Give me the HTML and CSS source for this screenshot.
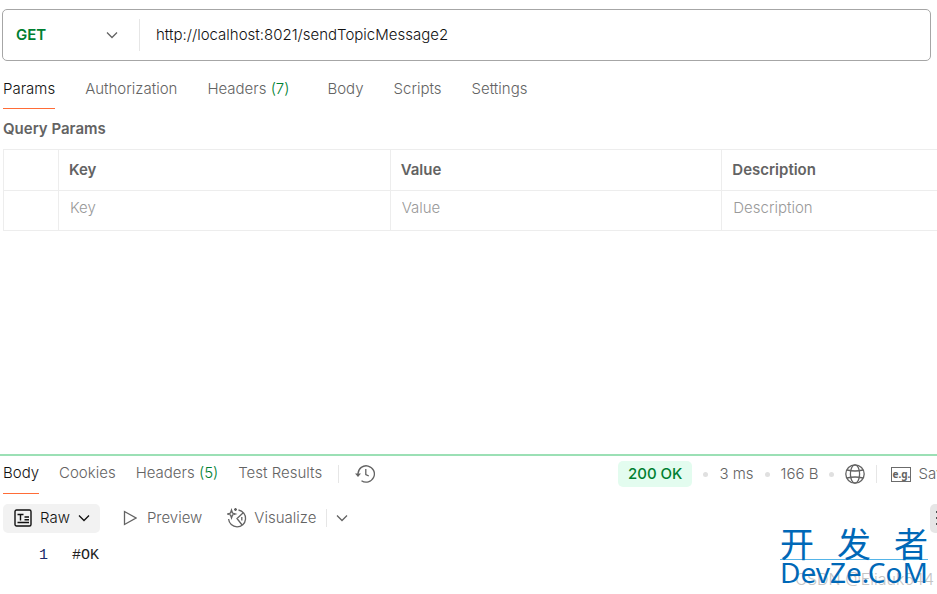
FILE: index.html
```html
<!DOCTYPE html>
<html lang="en">
  <head>
    <meta charset="utf-8">
    <title>Request</title>
    <link rel="stylesheet" href="styles.css">
  </head>
  <body>
    <main class="app">
      <section class="request">
        <form class="url_bar">
          <div class="method">
            <select class="method_select" aria-label="Method">
              <option>GET</option>
              <option>POST</option>
            </select>
            <svg class="chevron" viewBox="0 0 12 12"><path d="M1 3.5 6 8.5 11 3.5"/></svg>
          </div>
          <input class="url_input" type="text" aria-label="Request URL" value="http://localhost:8021/sendTopicMessage2">
        </form>

        <nav class="tabs request_tabs">
          <a class="tab tab_active" href="#">Params</a>
          <a class="tab" href="#">Authorization</a>
          <a class="tab tab_headers" href="#">Headers <span class="count">(7)</span></a>
          <a class="tab" href="#">Body</a>
          <a class="tab" href="#">Scripts</a>
          <a class="tab" href="#">Settings</a>
        </nav>

        <h2 class="params_title">Query Params</h2>
        <div class="params_wrap">
          <table class="params">
            <thead>
              <tr><th class="col_check"></th><th>Key</th><th>Value</th><th>Description</th></tr>
            </thead>
            <tbody>
              <tr>
                <td></td>
                <td><input type="text" placeholder="Key" aria-label="Key"></td>
                <td><input type="text" placeholder="Value" aria-label="Value"></td>
                <td><input type="text" placeholder="Description" aria-label="Description"></td>
              </tr>
            </tbody>
          </table>
        </div>
      </section>

      <section class="response">
        <div class="response_head">
          <nav class="tabs response_tabs">
            <a class="tab tab_active" href="#">Body</a>
            <a class="tab" href="#">Cookies</a>
            <a class="tab" href="#">Headers <span class="count">(5)</span></a>
            <a class="tab" href="#">Test Results</a>
          </nav>
          <span class="divider"></span>
          <button class="icon_btn" type="button" aria-label="History">
            <svg class="icon" viewBox="0 0 20 20"><path d="M3 11.5V9.5a8.2 8.2 0 1 1 3.5 7.2M10.8 5v5.5l3 1.5"/><path class="solid" d="M0 9.5h6L3 13z"/></svg>
          </button>
          <div class="meta">
            <span class="status">200 OK</span>
            <span class="dot"></span>
            <span>3 ms</span>
            <span class="dot"></span>
            <span>166 B</span>
            <span class="dot"></span>
            <button class="icon_btn" type="button" aria-label="Network">
              <svg class="icon" viewBox="0 0 20 20"><circle cx="10" cy="10" r="9.2"/><ellipse cx="10" cy="10" rx="4.6" ry="9.2"/><path d="M2 6q8 2 16 0M2 14q8-2 16 0"/></svg>
            </button>
            <span class="divider"></span>
            <button class="save" type="button"><span class="eg">e.g.</span>Save Response</button>
          </div>
        </div>

        <div class="toolbar">
          <button class="raw" type="button">
            <svg class="icon_raw" viewBox="0 0 18 18"><rect x="1" y="1" width="16" height="16" rx="1.5"/><path d="M3.5 5.5h6M6.5 5.5v6M10.5 8h4.5M10.5 10.7h4.5M3.5 13.5h11.5"/></svg>
            Raw
            <svg class="chevron" viewBox="0 0 12 12"><path d="M1 3.5 6 8.5 11 3.5"/></svg>
          </button>
          <button class="tool preview" type="button">
            <svg class="icon_play" viewBox="0 0 14 16"><path d="M1.5 1.5v13L13 8z"/></svg>
            Preview
          </button>
          <button class="tool" type="button">
            <svg class="icon" viewBox="0 0 20 20"><path d="M11.5 2a8.5 8.5 0 1 1-9.9 9M16.5 4.5 10 10.5 15.5 17.5M14.8 9v3.5"/><path d="M4.5 2 5.5 5 8.5 6 5.5 7 4.5 10 3.5 7 .5 6 3.5 5zM8.5 0v3M7 1.5h3"/></svg>
            Visualize
          </button>
          <span class="divider"></span>
          <button class="icon_btn" type="button" aria-label="More views">
            <svg class="chevron" viewBox="0 0 12 12"><path d="M1 3.5 6 8.5 11 3.5"/></svg>
          </button>
          <button class="wrap_btn" type="button" aria-label="Wrap lines">
            <svg class="icon" viewBox="0 0 20 20"><path d="M1 4h18M1 10h18M1 16h18"/></svg>
          </button>
        </div>

        <div class="code"><span class="line_no">1</span><code>#OK</code></div>
      </section>

      <div class="credit">CSDN @Eliauk544</div>
      <div class="brand">
        <div class="brand_cn"><span>开</span><span>发</span><span>者</span></div>
        <div class="brand_en">DevZe.CoM</div>
      </div>
    </main>
  </body>
</html>
```

FILE: styles.css
```css
* { box-sizing: border-box; }
body { margin: 0; background: #fff; color: #636363; font: 300 15px/20px Inter, "Noto Sans CJK SC", sans-serif; overflow: hidden; }
button, input, select { font: inherit; color: inherit; border: 0; padding: 0; margin: 0; background: none; outline: 0; }
button { display: flex; align-items: center; white-space: nowrap; }
svg { fill: none; stroke: currentColor; flex: none; }

.app { position: relative; display: flex; flex-direction: column; min-height: 100vh; }
.request { flex: 1; padding-top: 9px; }

.url_bar { display: flex; align-items: center; height: 52px; margin: 0 6px 0 2px; border: 1px solid #a6a6a6; border-radius: 5px; }
.method { display: flex; align-items: center; width: 137px; height: 32px; padding-right: 21px; border-right: 1px solid #e6e6e6; }
.method_select { flex: 1; appearance: none; padding-left: 13px; color: #007f31; font-weight: 600; }
.url_input { flex: 1; padding: 0 16px; color: #111; }
.chevron { width: 12px; height: 12px; stroke-width: 1.3; }

.tabs { display: flex; }
.tab { color: inherit; text-decoration: none; white-space: nowrap; border-bottom: 1px solid transparent; }
.tab_active { color: #111; border-bottom-color: #ff6c37; }
.count { color: #007f31; }
.request_tabs { gap: 30px; padding: 18px 3px 0; }
.request_tabs .tab { padding-bottom: 9px; }
.request_tabs .tab_headers { margin-right: 8px; }

.params_title { margin: 10px 3px; font-size: 15px; font-weight: 600; }
.params_wrap { overflow: hidden; margin-left: 3px; }
.params { width: calc(100% + 117px); table-layout: fixed; border-collapse: collapse; }
.params th, .params td { height: 40px; padding: 0 10px; border: 1px solid #ededed; text-align: left; }
.params th { height: 41px; font-weight: 600; }
.params td { padding: 0 11px 5px; }
.params .col_check { width: 55px; }
.params input { width: 100%; }
.params input::placeholder { color: #999; opacity: 1; }

.response { height: 140px; border-top: 2px solid #9be0b5; }
.response_head { display: flex; align-items: center; height: 36px; padding-left: 3px; }
.response_tabs { gap: 20px; align-self: flex-start; padding-top: 7px; }
.response_tabs .tab { padding-bottom: 10px; }
.divider { width: 1px; height: 18px; background: #e6e6e6; flex: none; }
.response_tabs + .divider { margin: 0 16px; }
.icon { width: 20px; height: 20px; stroke-width: 1.3; }
.solid { fill: currentColor; stroke: none; }
.meta { display: flex; align-items: center; gap: 11px; width: 319px; margin-left: auto; white-space: nowrap; overflow: hidden; }
.status { padding: 3px 10px; border-radius: 5px; background: #e3fcef; color: #007f31; font-weight: 500; }
.dot { width: 5px; height: 5px; border-radius: 50%; background: #e0e0e0; flex: none; }
.save { gap: 7px; margin-left: 3px; }
.eg { width: 20px; border: 1px solid #6b6b6b; font: bold 10px/13px "Noto Sans", sans-serif; text-align: center; }

.toolbar { display: flex; align-items: center; height: 52px; padding-left: 3px; overflow: hidden; }
.raw { gap: 8px; height: 29px; padding: 0 10px 0 11px; border-radius: 5px; background: #f2f2f2; color: #111; }
.icon_raw { width: 18px; height: 18px; stroke-width: 1.4; }
.icon_play { width: 14px; height: 16px; stroke-width: 1.3; }
.tool { gap: 7px; }
.preview { gap: 10px; margin: 0 25px 0 23px; }
.toolbar .divider { margin: 0 9px 0 10px; }
.wrap_btn { width: 7px; height: 29px; margin-left: auto; padding-left: 5px; border-radius: 5px 0 0 5px; background: #e6e6e6; color: #212121; overflow: hidden; }

.code { display: flex; gap: 24px; padding: 2px 0 0 39px; color: #212121; font: 15px/20px "Liberation Mono", monospace; }
.code code { font: inherit; }
.line_no { color: #1b2a6b; }

/* page marks laid over the response body */
.credit { position: absolute; right: 3px; bottom: 5px; color: #c4c4c4; font-size: 16px; }
.brand { position: absolute; right: 9px; bottom: 10px; width: 148px; color: #0068b7; }
.brand_cn { display: flex; justify-content: space-between; padding-bottom: 2px; border-bottom: 1px solid #54b4e8; font: 34px/28px "Noto Sans CJK SC", sans-serif; }
.brand_en { font: 28px/24px "Noto Sans", sans-serif; }
```
